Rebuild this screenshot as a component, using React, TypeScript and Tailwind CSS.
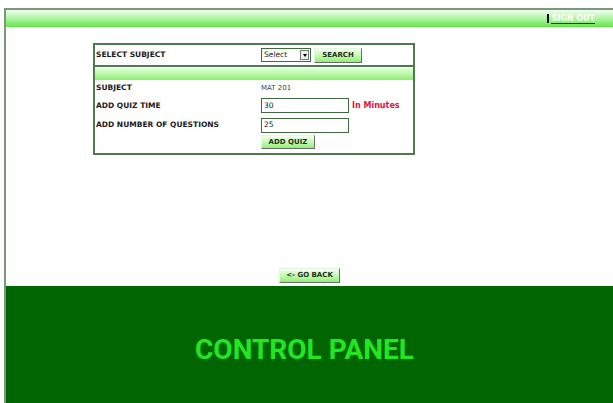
import React from "react";

const labelFont = { fontFamily: '"DejaVu Sans", Verdana, sans-serif' };

function GreenButton({ children, className = "" }: { children: React.ReactNode; className?: string }) {
  return (
    <button
      className={`flex items-center justify-center border border-t-[#e6f5e6] border-l-[#e6f5e6] border-r-[#6b6b6b] border-b-[#6b6b6b] bg-gradient-to-b from-[#f4fff0] to-[#8ef26c] text-[7px] font-bold text-[#1f2f1f] ${className}`}
      style={labelFont}
    >
      {children}
    </button>
  );
}

export default function App() {
  return (
    <div className="h-[403px] w-[613px] overflow-hidden bg-white" style={labelFont}>
      <div className="ml-[4px] mt-[8px] flex h-[395px] flex-col border-l-2 border-t-2 border-[#7d977d]">
        {/* top bar */}
        <div className="flex h-[17px] items-center justify-end bg-gradient-to-b from-[#effff0] to-[#5fe640] pr-[18px]">
          <span className="mr-[2px] h-[9px] w-[2px] bg-black" />
          <span className="border-b border-[#1c4a1c] text-[8px] font-bold leading-[9px] text-white">SIGN OUT</span>
        </div>

        {/* content */}
        <div className="flex h-[259px] flex-col">
          <div className="ml-[87px] mt-[16px] w-[322px] border-2 border-[#4f7a4f]">
            <div className="flex h-[20px] items-center">
              <div className="w-[166px] pl-[1px] text-[7.5px] font-bold text-[#1a1a1a]">SELECT SUBJECT</div>
              <div className="flex h-[14px] w-[50px] items-center border border-[#3f6a3f] bg-white">
                <span className="flex-1 pl-[2px] text-[7.5px] text-[#222]">Select</span>
                <span className="mr-[1px] flex h-[10px] w-[9px] items-center justify-center border border-[#777] bg-[#eee]">
                  <span className="h-0 w-0 border-x-[2.5px] border-t-[3px] border-x-transparent border-t-black" />
                </span>
              </div>
              <GreenButton className="ml-[3px] h-[15px] w-[48px]">SEARCH</GreenButton>
            </div>
            <div className="border-t-2 border-[#4f7a4f]" />
            <div className="mt-[1px] h-[12px] bg-gradient-to-b from-[#e4ffdc] to-[#8cee6c]" />
            <div className="flex h-[16px] items-center">
              <div className="w-[166px] pl-[1px] text-[7.5px] font-bold text-[#1a1a1a]">SUBJECT</div>
              <div className="text-[7px] text-[#444]">MAT 201</div>
            </div>
            <div className="flex h-[19px] items-center">
              <div className="w-[166px] pl-[1px] text-[7.5px] font-bold text-[#1a1a1a]">ADD QUIZ TIME</div>
              <div className="flex h-[15px] w-[88px] items-center border border-[#3f6a3f] pl-[2px] text-[7.5px] text-[#222]">30</div>
              <div className="ml-[3px] text-[8px] font-bold text-[#e8103a]">In Minutes</div>
            </div>
            <div className="flex h-[20px] items-center">
              <div className="w-[166px] pl-[1px] text-[7.5px] font-bold text-[#1a1a1a]">ADD NUMBER OF QUESTIONS</div>
              <div className="flex h-[15px] w-[88px] items-center border border-[#3f6a3f] pl-[2px] text-[7.5px] text-[#222]">25</div>
            </div>
            <div className="flex h-[18px] items-start">
              <div className="w-[166px]" />
              <GreenButton className="h-[14px] w-[54px]">ADD QUIZ</GreenButton>
            </div>
          </div>

          <div className="mt-auto mb-[3px] flex justify-center">
            <GreenButton className="h-[15px] w-[61px]">&lt;- GO BACK</GreenButton>
          </div>
        </div>

        {/* footer */}
        <div className="flex flex-1 items-start justify-center bg-[#016601] pr-[10px] pt-[50px]">
          <span
            className="text-[28px] font-bold leading-none text-[#22e622]"
            style={{ fontFamily: "Roboto, sans-serif" }}
          >
            CONTROL PANEL
          </span>
        </div>
      </div>
    </div>
  );
}
